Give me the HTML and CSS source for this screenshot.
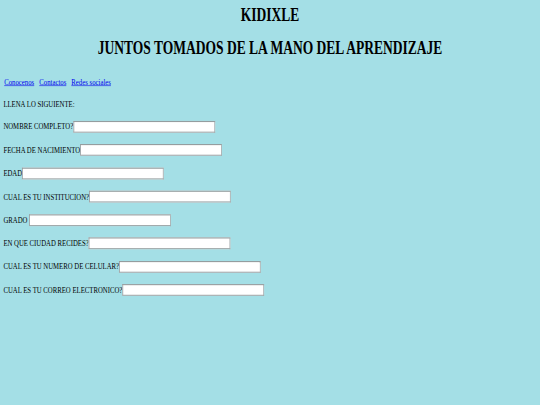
FILE: index.html
```html
<!DOCTYPE html>
<html lang="es">
<head>
<meta charset="utf-8">
<title>KIDIXLE</title>
<link rel="stylesheet" href="styles.css">
</head>
<body>
<div class="viewport">
  <div class="page">
    <header class="masthead">
      <h1 class="title">KIDIXLE</h1>
      <h1 class="title">JUNTOS TOMADOS DE LA MANO DEL APRENDIZAJE</h1>
    </header>
    <form class="form">
      <nav class="nav">
        <a href="#">Conocenos</a>
        <a href="#">Contactos</a>
        <a href="#">Redes sociales</a>
      </nav>
      <p class="intro">LLENA LO SIGUIENTE:</p>
      <label class="row">NOMBRE COMPLETO?<input type="text" class="field"></label>
      <label class="row">FECHA DE NACIMIENTO<input type="text" class="field"></label>
      <label class="row">EDAD<input type="text" class="field"></label>
      <label class="row">CUAL ES TU INSTITUCION?<input type="text" class="field"></label>
      <label class="row">GRADO&nbsp;<input type="text" class="field"></label>
      <label class="row">EN QUE CIUDAD RECIDES?<input type="text" class="field"></label>
      <label class="row">CUAL ES TU NUMERO DE CELULAR?<input type="text" class="field"></label>
      <label class="row">CUAL ES TU CORREO ELECTRONICO?<input type="text" class="field"></label>
    </form>
  </div>
</div>
</body>
</html>
```

FILE: styles.css
```css
html, body {
  margin: 0;
  padding: 0;
  width: 540px;
  height: 405px;
  overflow: hidden;
  background: #a4dfe6;
}

.viewport {
  width: 540px;
  height: 405px;
  overflow: hidden;
}

/* The reference is a 1280x720 page squeezed into 540x405 */
.page {
  box-sizing: border-box;
  width: 1280px;
  height: 720px;
  padding: 8px 8px 0;
  transform: scale(0.421875, 0.5625);
  transform-origin: 0 0;
  font-family: "Liberation Serif", "Times New Roman", serif;
  font-size: 16px;
  color: #000;
}

.masthead {
  display: flex;
  flex-direction: column;
  gap: 22px;
}

.title {
  margin: 0;
  font-size: 32px;
  font-weight: bold;
  line-height: 36.8px;
  text-align: center;
}

.form {
  display: flex;
  flex-direction: column;
  align-items: flex-start;
  gap: 20.5px;
  margin-top: 33.5px;
}

.nav {
  display: flex;
  gap: 12px;
  padding-left: 2px;
  line-height: 18.4px;
}

.nav a {
  color: #0000ee;
  text-decoration: underline;
}

.intro {
  margin: 0;
  line-height: 18.4px;
}

.row {
  display: flex;
  align-items: center;
  height: 21px;
  line-height: 18.4px;
  white-space: pre;
}

.field {
  box-sizing: border-box;
  width: 336px;
  height: 21px;
  margin: 0;
  padding: 1px 2px;
  border: 2px solid #a2aaac;
  border-top-color: #959d9f;
  border-left-color: #959d9f;
  border-radius: 0;
  background: #fff;
  outline: none;
}
```
